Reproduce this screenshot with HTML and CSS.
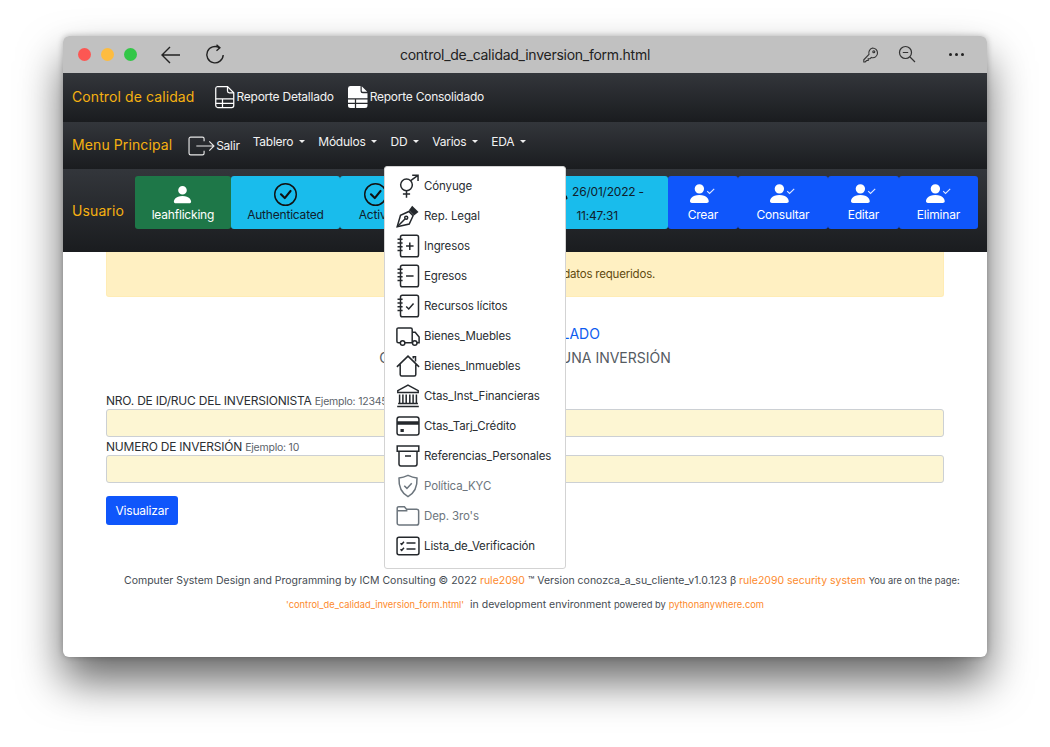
FILE: index.html
```html
<!DOCTYPE html>
<html>
<head>
    <meta charset="UTF-8">
    <title>control_de_calidad_inversion_form.html</title>
    <link rel="stylesheet" href="styles.css">
</head>
<body>
<div class="window">
    <div class="titlebar">
        <span class="light red"></span><span class="light amber"></span><span class="light green"></span>
        <svg class="tb-back" width="24" height="24" viewBox="0 0 24 24" fill="none" stroke="#222" stroke-width="1.4"><path d="M21 12H3M11 4l-8 8 8 8"/></svg>
        <svg class="tb-reload" width="22" height="22" viewBox="0 0 22 22" fill="none" stroke="#222" stroke-width="1.4"><path d="M15.5 3.8A8.2 8.2 0 1 0 19.2 11"/><path d="M12.5 .8l3.4 3-3.4 3"/></svg>
        <div class="tb-title">control_de_calidad_inversion_form.html</div>
        <svg class="tb-key" width="18" height="18" viewBox="0 0 18 18" fill="none" stroke="#333" stroke-width="1.1"><path d="M10.5 2a5 5 0 0 1 5 5 4.6 4.6 0 0 1-6.2 4.4L8 12.8H6.2v1.7H4.6L3.2 16H1.8v-2.2L7 8.3A5 5 0 0 1 10.5 2z"/><circle cx="11.8" cy="5.8" r="1"/></svg>
        <svg class="tb-zoom" width="18" height="18" viewBox="0 0 18 18" fill="none" stroke="#333" stroke-width="1.2"><circle cx="7.5" cy="7.5" r="6"/><path d="M4.8 7.5h5.4M12 12l5 5"/></svg>
        <div class="tb-dots"><i></i><i></i><i></i></div>
    </div>

    <div class="nav nav-one">
        <span class="brand">Control de calidad</span>
        <a class="nav-link report">
            <svg class="ic-report" viewBox="0 0 16 18" fill="none" stroke="#fff" stroke-width="1"><path d="M2 .6h8l5 5v10.2a1.6 1.6 0 0 1-1.6 1.6H2A1.6 1.6 0 0 1 .6 15.8V2A1.6 1.6 0 0 1 2 .6z"/><path d="M10 .6v3.6A1.4 1.4 0 0 0 11.4 5.6H15M.6 10.5h14.4M.6 14h14.4M6 10.5v6.9"/></svg>
            Reporte Detallado
        </a>
        <a class="nav-link report">
            <svg class="ic-report" viewBox="0 0 16 18"><path fill="#fff" d="M2 .2h8v4a1.8 1.8 0 0 0 1.8 1.8h3.8v9.8a2 2 0 0 1-2 2H2a2 2 0 0 1-2-2V2a2 2 0 0 1 2-1.8zM11 .4l4.4 4.4h-3.6a.8.8 0 0 1-.8-.8z"/><path stroke="#26282c" stroke-width="1" d="M0 10.5h16M0 14h16M6 10.5V18"/></svg>
            Reporte Consolidado
        </a>
    </div>

    <div class="nav nav-two">
        <span class="brand">Menu Principal</span>
        <a class="nav-link salir">
            <svg class="ic-salir" viewBox="0 0 26 19" fill="none" stroke="#e8e8e8" stroke-width="1.1"><path d="M15.5 5V2.6A1.6 1.6 0 0 0 13.9 1H2.6A1.6 1.6 0 0 0 1 2.6v13.8A1.6 1.6 0 0 0 2.6 18h11.3a1.6 1.6 0 0 0 1.6-1.6V14"/><path d="M8 9.5h17M20.5 5l4.5 4.5-4.5 4.5"/></svg>
            Salir
        </a>
        <a class="nav-link drop">Tablero</a>
        <a class="nav-link drop">Módulos</a>
        <a class="nav-link drop">DD</a>
        <a class="nav-link drop">Varios</a>
        <a class="nav-link drop">EDA</a>
    </div>

    <div class="nav nav-three">
        <span class="brand user-label">Usuario</span>
        <div class="tiles">
            <div class="tile tile-green w-user">
                <svg class="ic-tile" viewBox="0 0 16 16" fill="#fff"><path d="M3 14s-1 0-1-1 1-4 6-4 6 3 6 4-1 1-1 1H3zm5-6a3 3 0 1 0 0-6 3 3 0 0 0 0 6z"/></svg>
                leahflicking
            </div>
            <div class="tile tile-cyan w-auth">
                <svg class="ic-tile" viewBox="0 0 16 16" fill="#111"><path d="M8 15A7 7 0 1 1 8 1a7 7 0 0 1 0 14zm0 1A8 8 0 1 0 8 0a8 8 0 0 0 0 16z"/><path d="M10.97 4.97a.235.235 0 0 0-.02.022L7.477 9.417 5.384 7.323a.75.75 0 0 0-1.06 1.06L6.97 11.03a.75.75 0 0 0 1.079-.02l3.992-4.99a.75.75 0 0 0-1.071-1.05z"/></svg>
                Authenticated
            </div>
            <div class="tile tile-cyan w-active">
                <svg class="ic-tile" viewBox="0 0 16 16" fill="#111"><path d="M8 15A7 7 0 1 1 8 1a7 7 0 0 1 0 14zm0 1A8 8 0 1 0 8 0a8 8 0 0 0 0 16z"/><path d="M10.97 4.97a.235.235 0 0 0-.02.022L7.477 9.417 5.384 7.323a.75.75 0 0 0-1.06 1.06L6.97 11.03a.75.75 0 0 0 1.079-.02l3.992-4.99a.75.75 0 0 0-1.071-1.05z"/></svg>
                Active
            </div>
            <div class="tile tile-cyan tile-date w-date">
                <div class="date-line"><svg class="ic-date" viewBox="0 0 16 16" fill="#111"><path d="M3 14s-1 0-1-1 1-4 6-4 6 3 6 4-1 1-1 1H3zm5-6a3 3 0 1 0 0-6 3 3 0 0 0 0 6z"/></svg>26/01/2022 -</div>
                <div class="date-line time">11:47:31</div>
            </div>
            <div class="tile tile-blue w-crear">
                <svg class="ic-tile ic-wide" viewBox="0 0 16 16" fill="#fff"><path d="M1 14s-1 0-1-1 1-4 6-4 6 3 6 4-1 1-1 1H1zm5-6a3 3 0 1 0 0-6 3 3 0 0 0 0 6z"/><path fill="none" stroke="#dfe8ff" stroke-width=".7" d="M11 6.5l1.5 1.5 3-3"/></svg>
                Crear
            </div>
            <div class="tile tile-blue w-consultar">
                <svg class="ic-tile ic-wide" viewBox="0 0 16 16" fill="#fff"><path d="M1 14s-1 0-1-1 1-4 6-4 6 3 6 4-1 1-1 1H1zm5-6a3 3 0 1 0 0-6 3 3 0 0 0 0 6z"/><path fill="none" stroke="#dfe8ff" stroke-width=".7" d="M11 6.5l1.5 1.5 3-3"/></svg>
                Consultar
            </div>
            <div class="tile tile-blue w-editar">
                <svg class="ic-tile ic-wide" viewBox="0 0 16 16" fill="#fff"><path d="M1 14s-1 0-1-1 1-4 6-4 6 3 6 4-1 1-1 1H1zm5-6a3 3 0 1 0 0-6 3 3 0 0 0 0 6z"/><path fill="none" stroke="#dfe8ff" stroke-width=".7" d="M11 6.5l1.5 1.5 3-3"/></svg>
                Editar
            </div>
            <div class="tile tile-blue w-eliminar">
                <svg class="ic-tile ic-wide" viewBox="0 0 16 16" fill="#fff"><path d="M1 14s-1 0-1-1 1-4 6-4 6 3 6 4-1 1-1 1H1zm5-6a3 3 0 1 0 0-6 3 3 0 0 0 0 6z"/><path fill="none" stroke="#dfe8ff" stroke-width=".7" d="M11 6.5l1.5 1.5 3-3"/></svg>
                Eliminar
            </div>
        </div>
    </div>

    <div class="content">
        <div class="alert">Por favor proporcione todos los datos requeridos.</div>
        <div class="headings">
            <a class="head-link">REPORTE DETALLADO</a>
            <div class="head-sub">CONTROL DE CALIDAD DE UNA INVERSIÓN</div>
        </div>
        <form class="form">
            <label>NRO. DE ID/RUC DEL INVERSIONISTA <small>Ejemplo: 1234567890</small></label>
            <input type="text">
            <label>NUMERO DE INVERSIÓN <small>Ejemplo: 10</small></label>
            <input type="text">
            <div><button type="button" class="btn">Visualizar</button></div>
        </form>
        <div class="footer">
            <div class="foot-one">Computer System Design and Programming by ICM Consulting © 2022 <b>rule2090</b> ™ Version conozca_a_su_cliente_v1.0.123 β <b>rule2090 security system</b> <small>You are on the page:</small></div>
            <div class="foot-two"><b class="tiny">'control_de_calidad_inversion_form.html'</b> &nbsp;in development environment <small>powered by</small> <b class="tiny">pythonanywhere.com</b></div>
        </div>
    </div>

    <ul class="menu">
        <li><svg viewBox="0 0 16 16"><circle cx="7" cy="7.2" r="3.9"/><path d="M9.8 4.4L14.6.9M10.8.8h3.9v3.9M7 11v4.8M4.6 13.4h4.8"/></svg>Cónyuge</li>
        <li><svg viewBox="0 0 16 16"><path d="M.8 15.2L3 7.6 8.6 5l2.8 2.8-2.6 5.6z"/><path d="M.8 15.2L6 10"/><circle cx="6.8" cy="9.2" r="1"/><path class="solid" d="M8.6 4.2L10.8 1.2 15 5.4 12 7.6z"/></svg>Rep. Legal</li>
        <li><svg viewBox="0 0 16 16"><rect x="3" y=".8" width="12" height="14.4" rx="1.2"/><path d="M1 3.5h3.4M1 6h3.4M1 8.5h3.4M1 11h3.4M9.2 5.6v5M6.7 8h5"/></svg>Ingresos</li>
        <li><svg viewBox="0 0 16 16"><rect x="3" y=".8" width="12" height="14.4" rx="1.2"/><path d="M1 3.5h3.4M1 6h3.4M1 8.5h3.4M1 11h3.4M6.7 8h5"/></svg>Egresos</li>
        <li><svg viewBox="0 0 16 16"><rect x="3" y=".8" width="12" height="14.4" rx="1.2"/><path d="M1 3.5h3.4M1 6h3.4M1 8.5h3.4M1 11h3.4M6.8 8.3l1.7 1.7 3.2-3.6"/></svg>Recursos lícitos</li>
        <li><svg viewBox="0 0 16 16"><path d="M3 12.5H1.6a1 1 0 0 1-1-1V3.6a1 1 0 0 1 1-1h8.2a1 1 0 0 1 1 1v8.9H6M10.8 5.5h2l2.6 3.2v3.8H14"/><circle cx="4.4" cy="12.7" r="1.5"/><circle cx="12.5" cy="12.7" r="1.5"/></svg>Bienes_Muebles</li>
        <li><svg viewBox="0 0 16 16"><path d="M.6 8.6L8 1.4l7.4 7.2M2.8 7v6.6a1 1 0 0 0 1 1h8.4a1 1 0 0 0 1-1V7M11.5 3V1.8H13V5"/></svg>Bienes_Inmuebles</li>
        <li><svg viewBox="0 0 16 16"><path d="M8 .8l6.8 3.6v1.2H1.2V4.4zM2.4 7v5.5M4.6 7v5.5M6.8 7v5.5M9.2 7v5.5M11.4 7v5.5M13.6 7v5.5M1.4 13h13.2M.8 15h14.4"/></svg>Ctas_Inst_Financieras</li>
        <li><svg viewBox="0 0 16 16"><rect x=".7" y="2" width="14.6" height="12" rx="1.5"/><path class="solid" d="M.7 4.8h14.6v2.4H.7zM3 10h2.2v2H3z"/></svg>Ctas_Tarj_Crédito</li>
        <li><svg viewBox="0 0 16 16"><path d="M.8 1.4h14.4v3.4H.8zM2 4.8v8.6a1.2 1.2 0 0 0 1.2 1.2h9.6a1.2 1.2 0 0 0 1.2-1.2V4.8M6 8h4"/></svg>Referencias_Personales</li>
        <li class="off"><svg viewBox="0 0 16 16"><path d="M8 .9c2 .9 3.8 1.5 6 1.8.3 5.9-1.7 10-6 12.4C3.7 12.7 1.7 8.6 2 2.7 4.2 2.4 6 1.8 8 .9z"/><path d="M5.5 7.8l1.8 1.8 3.2-3.4"/></svg>Política_KYC</li>
        <li class="off"><svg viewBox="0 0 16 16"><path d="M.8 4V2.8a1 1 0 0 1 1-1h3.8l1.4 1.7h6.8a1.3 1.3 0 0 1 1.3 1.3v7.8a1.4 1.4 0 0 1-1.4 1.4H2.3a1.4 1.4 0 0 1-1.5-1.4z"/><path d="M.8 4.5h6.8"/></svg>Dep. 3ro's</li>
        <li><svg viewBox="0 0 16 16"><rect x=".7" y="2.2" width="14.6" height="11.6" rx="1.3"/><path d="M7 6h6M7 10h6M3 6.2l.8.8 1.5-1.8M3 10.2l.8.8 1.5-1.8"/></svg>Lista_de_Verificación</li>
    </ul>
</div>
</body>
</html>
```

FILE: styles.css
```css
* {
    box-sizing: border-box;
}
html, body {
    margin: 0;
    background: #fff;
    overflow: hidden;
}
body {
    height: 747px;
    padding: 36px 63px 0;
    font-family: Inter, "Liberation Sans", sans-serif;
    font-size: 12px;
    color: #212529;
}
.window {
    position: relative;
    width: 924px;
    height: 621px;
    border-radius: 6px;
    background: #fff;
    box-shadow: 0 24px 44px rgba(0, 0, 0, .6), 0 0 6px rgba(0, 0, 0, .25);
}

/* title bar */
.titlebar {
    position: relative;
    height: 37px;
    background: #c1c1c1;
    border-radius: 6px 6px 0 0;
    display: flex;
    align-items: center;
    padding-left: 15px;
}
.light {
    width: 13px;
    height: 13px;
    border-radius: 50%;
    margin-right: 10px;
}
.red { background: #fc5753; }
.amber { background: #fdbc40; }
.green { background: #33c748; }
.tb-back { margin-left: 12px; }
.tb-reload { margin-left: 21px; }
.tb-title {
    position: absolute;
    left: 0;
    right: 0;
    text-align: center;
    font-size: 14px;
    letter-spacing: -.26px;
    color: #222;
}
.tb-key { position: absolute; left: 799px; top: 10px; }
.tb-zoom { position: absolute; left: 835px; top: 9px; }
.tb-dots {
    position: absolute;
    left: 886px;
    top: 17px;
    display: flex;
    gap: 3px;
}
.tb-dots i {
    width: 3px;
    height: 3px;
    border-radius: 50%;
    background: #222;
}

/* dark bars */
.nav {
    display: flex;
    align-items: center;
    padding-left: 9px;
    background: linear-gradient(180deg, #33363b 0%, #1a1c1f 100%);
    color: #fff;
}
.nav-one { height: 49px; padding-bottom: 2px; }
.nav-two { height: 47px; padding-bottom: 2px; }
.nav-three { height: 83px; }
.brand {
    color: #f5b111;
    font-size: 14px;
    letter-spacing: .1px;
}
.nav-link {
    display: flex;
    align-items: center;
    font-size: 12px;
    letter-spacing: -.25px;
    color: #f2f2f2;
}
.report { gap: 2px; margin-left: 14px; }
.nav-one .report:first-of-type { margin-left: 20px; }
.ic-report { width: 20px; height: 24px; }
.salir { gap: 1px; margin-left: 16px; margin-top: 2px; }
.ic-salir { width: 27px; height: 20px; }
.drop { margin-left: 13px; margin-top: -6px; }
.drop::after {
    content: "";
    margin-left: 6px;
    border-top: 3.5px solid #eee;
    border-left: 3.5px solid transparent;
    border-right: 3.5px solid transparent;
}

/* tiles */
.tiles {
    display: flex;
    margin-left: 11px;
    height: 53px;
    align-self: flex-start;
    margin-top: 7px;
}
.tile {
    display: flex;
    flex-direction: column;
    align-items: center;
    justify-content: space-between;
    padding: 7px 0 7px;
    border-radius: 3px;
    font-size: 12px;
    letter-spacing: -.2px;
    line-height: 14px;
}
.tile-green { background: #1e7748; color: #fff; }
.tile-cyan { background: #19bcec; color: #10202c; }
.tile-blue { background: #0f56fb; color: #fff; }
.w-user { width: 96px; }
.w-auth { width: 109px; }
.w-active { width: 72px; }
.w-date { width: 256px; }
.w-crear { width: 70px; }
.w-consultar { width: 90px; }
.w-editar { width: 71px; }
.w-eliminar { width: 79px; }
.ic-tile { width: 23px; height: 23px; }
.ic-wide { width: 25px; height: 25px; margin-top: -2px; }
.tile-date {
    justify-content: center;
    align-items: flex-end;
    gap: 7px;
    padding-right: 24px;
}
.date-line { display: flex; align-items: center; }
.ic-date { width: 20px; height: 20px; margin-right: 2px; }
.time { margin-right: 26px; }

/* page body */
.content {
    padding: 0 43px;
}
.alert {
    height: 45px;
    background: #fff0c2;
    border: 1px solid #ffecb5;
    border-top: 0;
    border-radius: 0 0 3px 3px;
    color: #5f4a10;
    font-size: 11.5px;
    letter-spacing: -.2px;
    text-align: center;
    line-height: 45px;
}
.headings {
    margin-top: 25px;
    text-align: center;
    font-size: 14px;
    letter-spacing: 0;
    line-height: 24px;
    height: 48px;
}
.head-link { color: #0d5cf0; display: block; }
.head-sub { color: #555b62; }
.form {
    margin-top: 21px;
    display: flex;
    flex-direction: column;
}
label {
    height: 18px;
    font-size: 12px;
    letter-spacing: -.22px;
    line-height: 19px;
    color: #2b2f33;
}
label small {
    font-size: 10.5px;
    color: #5c636a;
}
input {
    height: 28px;
    background: #fdf6d3;
    border: 1px solid #ccd0d4;
    border-radius: 3px;
    display: block;
    width: 100%;
}
.btn {
    margin-top: 13px;
    width: 72px;
    height: 29px;
    background: #0f56fb;
    color: #fff;
    border: 0;
    border-radius: 3px;
    font-family: inherit;
    font-size: 12px;
    letter-spacing: -.2px;
}
.footer {
    margin-top: 44px;
    font-size: 10.5px;
    color: #454b52;
    white-space: nowrap;
    line-height: 24px;
}
.footer b {
    font-weight: 400;
    color: #fd8a2c;
}
.footer small { font-size: 9.3px; }
.footer .tiny { font-size: 9.3px; }
.foot-one { margin-left: 18px; }
.foot-two { text-align: center; }

/* dropdown */
.menu {
    position: absolute;
    left: 321px;
    top: 130px;
    width: 182px;
    height: 403px;
    margin: 0;
    padding: 4px 0 0;
    list-style: none;
    background: #fff;
    border: 1px solid #d3d3d3;
    border-radius: 3px;
}
.menu li {
    display: flex;
    align-items: center;
    height: 30px;
    padding-left: 11px;
    font-size: 11.5px;
    letter-spacing: -.12px;
    color: #2a2e32;
}
.menu svg {
    width: 24px;
    height: 24px;
    margin-right: 4px;
    fill: none;
    stroke: #24282c;
    stroke-width: 1;
    flex: none;
}
.menu svg .solid {
    fill: #24282c;
    stroke: none;
}
.menu .off { color: #6c757d; }
.menu .off svg { stroke: #6c757d; }
```
